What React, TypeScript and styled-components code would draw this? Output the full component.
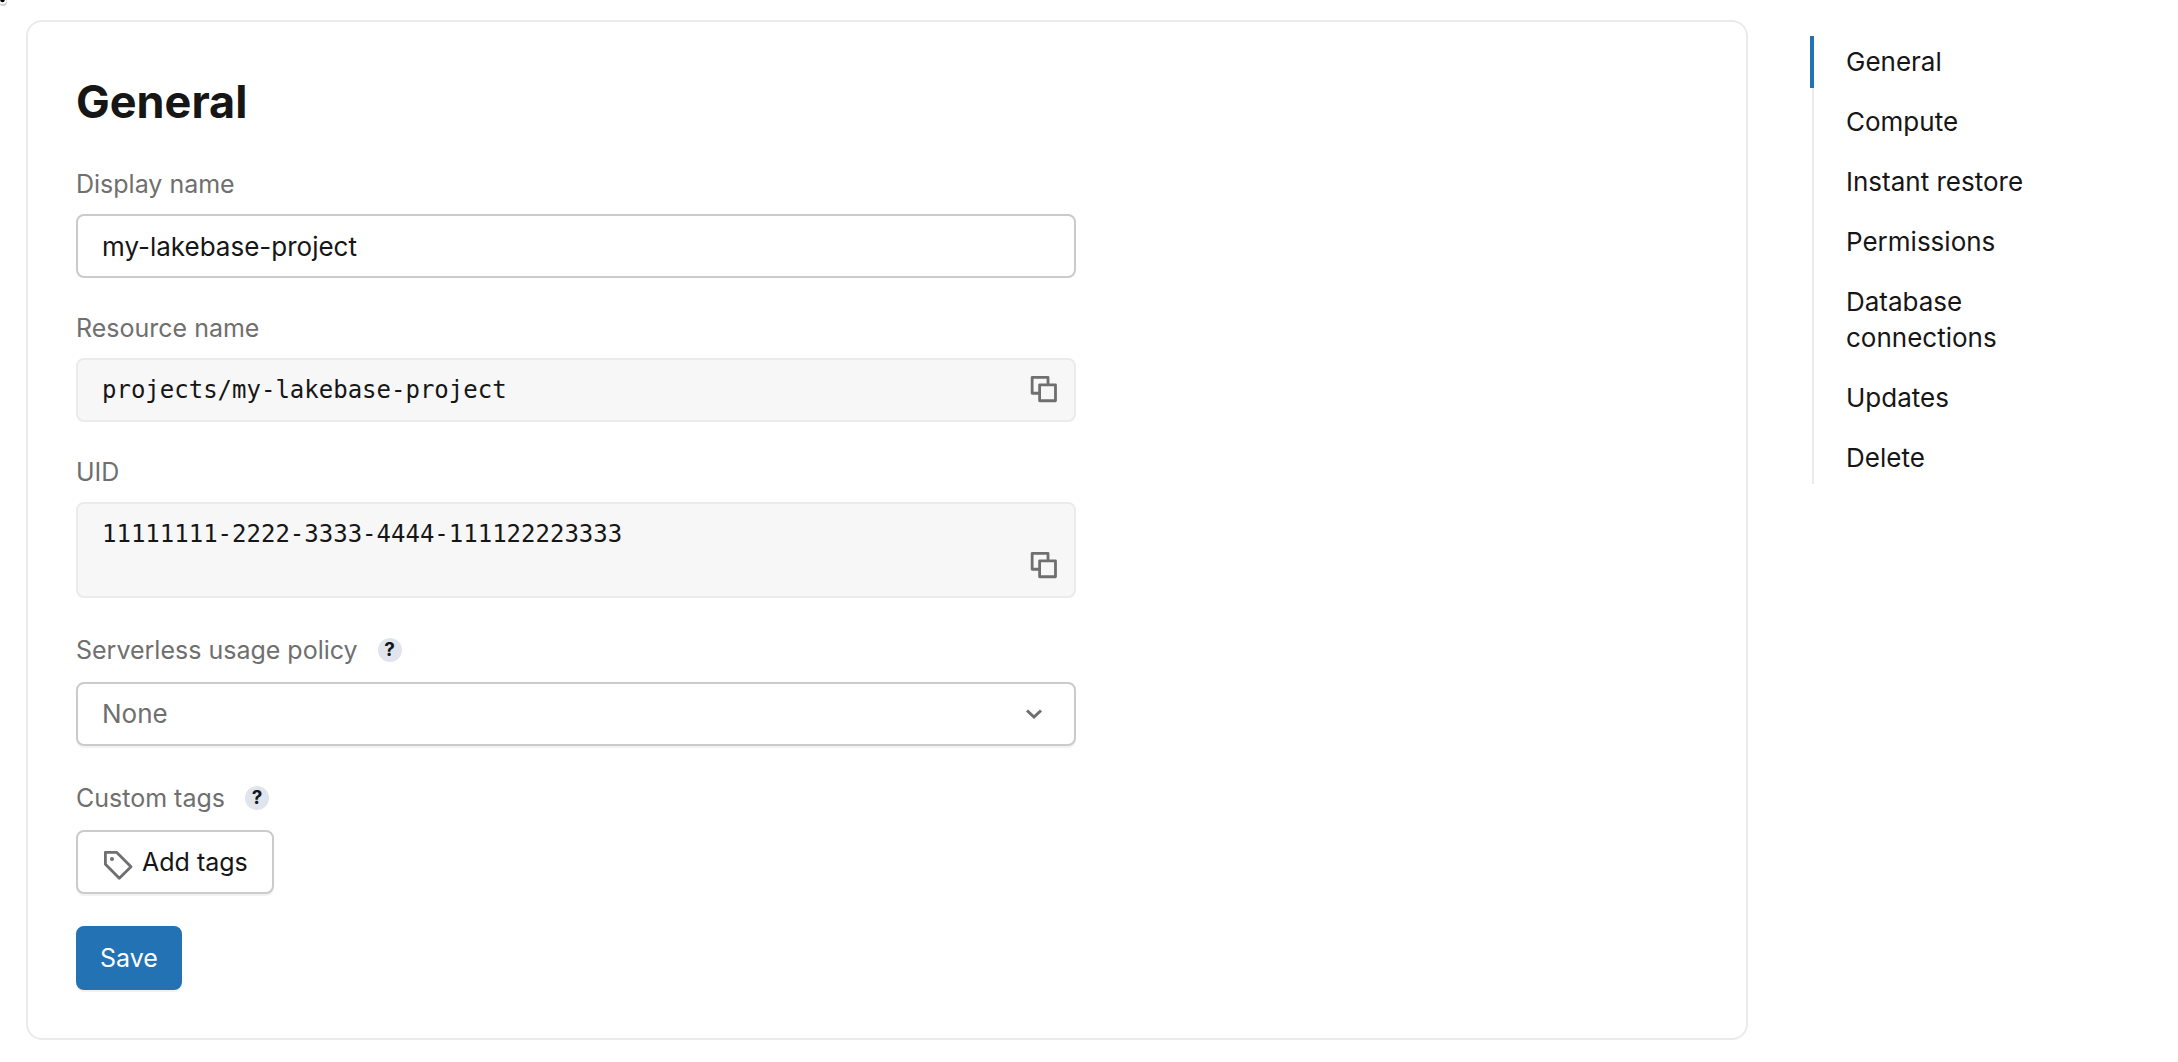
import React from "react";
import styled, { createGlobalStyle } from "styled-components";

const sans = `Inter, "Liberation Sans", sans-serif`;
const mono = `"DejaVu Sans Mono", "Liberation Mono", monospace`;

const color = {
  text: "#161616",
  muted: "#6f6f6f",
  line: "#ebebeb",
  control: "#cbcbcb",
  readOnly: "#f7f7f7",
  primary: "#2272b4",
  help: "#e0e5ed",
};

const GlobalStyle = createGlobalStyle`
  *, *::before, *::after { box-sizing: border-box; }
  body {
    margin: 0;
    background: #fff;
    color: ${color.text};
    font-family: ${sans};
    font-size: 25px;
    line-height: 36px;
  }
  button, input, select { font: inherit; color: inherit; margin: 0; }
`;

const Page = styled.div`
  display: flex;
  align-items: flex-start;
  gap: 64px;
  padding: 20px 126px 22px 26px;
`;

const PointerMark = styled.svg`
  position: absolute;
  top: 0;
  left: 0;
  width: 12px;
  height: 12px;
`;

const Card = styled.main`
  flex: 1;
  min-width: 0;
  padding: 48px;
  border: 2px solid ${color.line};
  border-radius: 16px;
`;

const Form = styled.form`
  display: flex;
  flex-direction: column;
  align-items: flex-start;
  gap: 32px;
  max-width: 1000px;
`;

const Title = styled.h1`
  margin: 0;
  font-size: 45px;
  line-height: 64px;
  font-weight: 700;
`;

const Field = styled.div`
  display: flex;
  flex-direction: column;
  align-items: flex-start;
  gap: 12px;
  width: 100%;
`;

const Label = styled.label`
  color: ${color.muted};
`;

const LabelRow = styled.div`
  display: flex;
  align-items: center;
  gap: 20px;
  height: 40px;
  color: ${color.muted};
`;

const Help = styled.button`
  width: 24px;
  height: 24px;
  padding: 0;
  border: 0;
  border-radius: 50%;
  background: ${color.help};
  color: #11171c;
  font-size: 19px;
  line-height: 24px;
  font-weight: 700;
`;

const TextInput = styled.input`
  width: 100%;
  height: 64px;
  padding: 0 24px;
  border: 2px solid ${color.control};
  border-radius: 8px;
  background: #fff;
  font-size: 26px;
`;

const ReadOnlyBox = styled.div<{ $tall?: boolean }>`
  display: flex;
  align-items: flex-start;
  gap: 16px;
  width: 100%;
  min-height: ${(p) => (p.$tall ? 96 : 64)}px;
  padding: 16px 16px 16px 24px;
  border: 2px solid ${color.line};
  border-radius: 8px;
  background: ${color.readOnly};
`;

const ReadOnlyInput = styled.input`
  flex: 1;
  min-width: 0;
  height: 28px;
  padding: 0;
  border: 0;
  background: transparent;
  font-family: ${mono};
  font-size: 24px;
  line-height: 28px;
`;

const CopyButton = styled.button`
  display: flex;
  align-self: flex-end;
  padding: 0;
  border: 0;
  background: transparent;
  color: ${color.muted};
`;

const SelectWrap = styled.div`
  position: relative;
  width: 100%;
`;

const Select = styled.select`
  appearance: none;
  display: block;
  width: 100%;
  height: 64px;
  padding: 0 64px 0 24px;
  border: 2px solid ${color.control};
  border-radius: 8px;
  background: #fff;
  color: ${color.muted};
  font-size: 26px;
  box-shadow: 0 2px 0 rgba(0, 0, 0, 0.05);
`;

const Chevron = styled.svg`
  position: absolute;
  top: 16px;
  right: 26px;
  width: 32px;
  height: 32px;
  color: ${color.muted};
  pointer-events: none;
`;

const Button = styled.button<{ $primary?: boolean }>`
  display: flex;
  align-items: center;
  gap: 8px;
  height: 64px;
  padding: 0 ${(p) => (p.$primary ? 22 : 24)}px;
  border: 2px solid ${(p) => (p.$primary ? color.primary : color.control)};
  border-radius: 8px;
  background: ${(p) => (p.$primary ? color.primary : "#fff")};
  color: ${(p) => (p.$primary ? "#fff" : color.text)};
  box-shadow: 0 2px 0 rgba(0, 0, 0, 0.05);
`;

const TagSvg = styled.svg`
  width: 32px;
  height: 36px;
  color: ${color.muted};
`;

const Nav = styled.nav`
  width: 240px;
  margin-top: 16px;
  border-left: 2px solid ${color.line};
  font-size: 26px;
`;

const NavList = styled.ul`
  display: flex;
  flex-direction: column;
  gap: 8px;
  margin: 0;
  padding: 0;
  list-style: none;
`;

const NavLink = styled.a<{ $active?: boolean }>`
  display: block;
  margin-left: -4px;
  padding: 8px 24px 8px 32px;
  border-left: 4px solid ${(p) => (p.$active ? color.primary : "transparent")};
  color: inherit;
  text-decoration: none;
`;

const CopyIcon = () => (
  <svg width="28" height="28" viewBox="0.6 1 15 15" fill="currentColor" aria-hidden="true">
    <path
      fillRule="evenodd"
      d="M1.75 1a.75.75 0 0 0-.75.75v8.5c0 .414.336.75.75.75H5v3.25c0 .414.336.75.75.75h8.5a.75.75 0 0 0 .75-.75v-8.5a.75.75 0 0 0-.75-.75H11V1.75a.75.75 0 0 0-.75-.75zM9.5 5V2.5h-7v7H5V5.75A.75.75 0 0 1 5.75 5zm-3 8.5v-7h7v7z"
    />
  </svg>
);

const TagIcon = () => (
  <TagSvg viewBox="0 0 32 36" fill="none" aria-hidden="true">
    <path d="M3.4 8.4H14.8L29 22.7L17.3 34.2L3.4 20.2Z" stroke="currentColor" strokeWidth="2.8" strokeLinejoin="round" />
    <circle cx="10" cy="15" r="2" fill="currentColor" />
  </TagSvg>
);

interface ReadOnlyFieldProps {
  id: string;
  label: string;
  value: string;
  tall?: boolean;
}

const ReadOnlyField = ({ id, label, value, tall }: ReadOnlyFieldProps) => (
  <Field>
    <Label htmlFor={id}>{label}</Label>
    <ReadOnlyBox $tall={tall}>
      <ReadOnlyInput id={id} value={value} readOnly />
      <CopyButton type="button" aria-label={`Copy ${label}`}>
        <CopyIcon />
      </CopyButton>
    </ReadOnlyBox>
  </Field>
);

const sections = ["General", "Compute", "Instant restore", "Permissions", "Database connections", "Updates", "Delete"];

export default function App() {
  return (
    <>
      <GlobalStyle />
      <PointerMark viewBox="0 0 12 12" aria-hidden="true">
        <circle cx="3" cy="2" r="4" fill="#000" opacity="0.18" />
        <circle cx="2.5" cy="0" r="4" fill="#fff" />
        <circle cx="2.5" cy="0" r="2.3" fill="#000" />
      </PointerMark>
      <Page>
        <Card id="general">
          <Form onSubmit={(e) => e.preventDefault()}>
            <Title>General</Title>
            <Field>
              <Label htmlFor="display-name">Display name</Label>
              <TextInput id="display-name" defaultValue="my-lakebase-project" spellCheck={false} />
            </Field>
            <ReadOnlyField id="resource-name" label="Resource name" value="projects/my-lakebase-project" />
            <ReadOnlyField id="uid" label="UID" value="11111111-2222-3333-4444-111122223333" tall />
            <Field>
              <LabelRow>
                <Label htmlFor="usage-policy">Serverless usage policy</Label>
                <Help type="button" aria-label="About serverless usage policy">?</Help>
              </LabelRow>
              <SelectWrap>
                <Select id="usage-policy" defaultValue="none">
                  <option value="none">None</option>
                </Select>
                <Chevron viewBox="0 0 32 32" fill="none" aria-hidden="true">
                  <path d="M9 12.5L16 19L23 12.5" stroke="currentColor" strokeWidth="3" />
                </Chevron>
              </SelectWrap>
            </Field>
            <Field>
              <LabelRow>
                <Label htmlFor="add-tags">Custom tags</Label>
                <Help type="button" aria-label="About custom tags">?</Help>
              </LabelRow>
              <Button id="add-tags" type="button">
                <TagIcon />
                Add tags
              </Button>
            </Field>
            <Button type="submit" $primary>Save</Button>
          </Form>
        </Card>
        <Nav aria-label="Settings sections">
          <NavList>
            {sections.map((name, i) => (
              <li key={name}>
                <NavLink href={`#${name.toLowerCase().replace(" ", "-")}`} $active={i === 0}>
                  {name}
                </NavLink>
              </li>
            ))}
          </NavList>
        </Nav>
      </Page>
    </>
  );
}
